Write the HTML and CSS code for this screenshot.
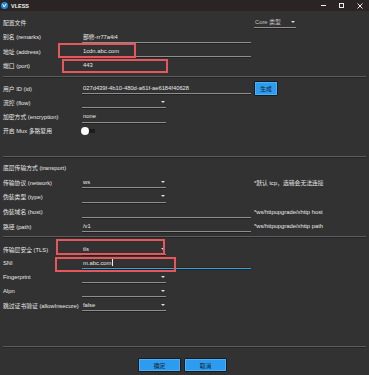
FILE: index.html
```html
<!DOCTYPE html>
<html lang="zh-CN">
<head>
  <meta charset="UTF-8" />
  <meta name="viewport" content="width=device-width, initial-scale=1.0"/>
  <title>VLESS</title>
  <link rel="stylesheet" href="styles.css">
</head>
<body>

  <div class="window">
    <header class="titlebar">
      <svg class="app-icon" width="7" height="7" viewBox="0 0 14 14">
        <circle cx="7" cy="7" r="7" fill="#1f8ad8"/>
        <path d="M3.5 4.5 L6.5 10 L10.5 3.5" fill="none" stroke="#fff" stroke-width="2"/>
      </svg>
      <span class="app-title">VLESS</span>
      <div class="win-controls">
        <svg width="5" height="5" viewBox="0 0 5 5"><rect x="0" y="2" width="5" height="1" fill="#eee"/></svg>
        <svg width="5" height="5" viewBox="0 0 5 5"><rect x="0.5" y="0.5" width="4" height="4" fill="none" stroke="#eee"/></svg>
        <svg width="6" height="6" viewBox="0 0 6 6"><path d="M0.5 0.5 L5.5 5.5 M5.5 0.5 L0.5 5.5" stroke="#eee" stroke-width="1"/></svg>
      </div>
    </header>

    <main class="content">
      <section class="group g-profile">
        <div class="row">
          <span class="label">配置文件</span>
          <span></span>
          <div class="combo core-combo">Core 类型</div>
        </div>
        <div class="row">
          <span class="label">别名 (remarks)</span>
          <div class="field">部修-rr77a4i4</div>
        </div>
        <div class="row">
          <span class="label">地址 (address)</span>
          <div class="field">1cdn.abc.com</div>
        </div>
        <div class="row">
          <span class="label">端口 (port)</span>
          <div class="field short">443</div>
        </div>
      </section>

      <hr class="sep">

      <section class="group g-user">
        <div class="row">
          <span class="label">用户 ID (id)</span>
          <div class="field">027d439f-4b10-480d-a61f-ae6184f40628</div>
          <button class="btn btn-small">生成</button>
        </div>
        <div class="row">
          <span class="label">流控 (flow)</span>
          <div class="combo"></div>
        </div>
        <div class="row">
          <span class="label">加密方式 (encryption)</span>
          <div class="field short">none</div>
        </div>
        <div class="row">
          <span class="label">开启 Mux 多路复用</span>
          <div class="switch"></div>
        </div>
      </section>

      <hr class="sep">

      <section class="group g-transport">
        <div class="row">
          <span class="label">底层传输方式 (transport)</span>
        </div>
        <div class="row">
          <span class="label">传输协议 (network)</span>
          <div class="combo">ws</div>
          <span class="note">*默认 tcp，选错会无法连接</span>
        </div>
        <div class="row">
          <span class="label">伪装类型 (type)</span>
          <div class="combo"></div>
        </div>
        <div class="row">
          <span class="label">伪装域名 (host)</span>
          <div class="field"></div>
          <span class="note">*ws/httpupgrade/xhttp host</span>
        </div>
        <div class="row">
          <span class="label">路径 (path)</span>
          <div class="field">/v1</div>
          <span class="note">*ws/httpupgrade/xhttp path</span>
        </div>
      </section>

      <hr class="sep">

      <section class="group g-tls">
        <div class="row">
          <span class="label">传输层安全 (TLS)</span>
          <div class="combo">tls</div>
        </div>
        <div class="row">
          <span class="label">SNI</span>
          <div class="field focused">m.abc.com<span class="caret"></span></div>
        </div>
        <div class="row">
          <span class="label">Fingerprint</span>
          <div class="combo"></div>
        </div>
        <div class="row">
          <span class="label">Alpn</span>
          <div class="combo"></div>
        </div>
        <div class="row">
          <span class="label">跳过证书验证 (allowInsecure)</span>
          <div class="combo">false</div>
        </div>
      </section>

      <hr class="sep">
    </main>

    <footer class="actions">
      <button class="btn">确定</button>
      <button class="btn">取消</button>
    </footer>

    <!-- annotation boxes drawn over the form -->
    <div class="mark mark-address"></div>
    <div class="mark mark-port"></div>
    <div class="mark mark-tls"></div>
    <div class="mark mark-sni"></div>
  </div>

</body>
</html>
```

FILE: styles.css
```css
body {
  margin: 0;
  background-color: #323232;
  font-family: "Liberation Sans", "Noto Sans CJK SC", sans-serif;
  font-size: 5.8px;
  color: #e8e8e8;
}

.window {
  position: relative;
  width: 369px;
  height: 375px;
  display: flex;
  flex-direction: column;
  overflow: hidden;
  background-color: #323232;
}

.titlebar {
  height: 11px;
  flex-shrink: 0;
  display: flex;
  align-items: center;
  padding: 0 6px 0 1px;
  background-color: #2a2424;
}

.app-icon {
  margin-right: 3px;
}

.app-title {
  font-weight: bold;
  font-size: 5.5px;
  color: #f2f2f2;
}

.win-controls {
  margin-left: auto;
  display: flex;
  align-items: center;
  gap: 13px;
}

.content {
  flex: 1;
  display: flex;
  flex-direction: column;
  padding: 0 3px;
}

.group {
  --rh: 14.5px;
  display: flex;
  flex-direction: column;
}

.g-profile {
  padding: 3.75px 0 3.25px;
}

.g-user {
  --rh: 14.33px;
  padding: 3.75px 0 18.25px;
}

.g-transport {
  --rh: 14.75px;
  padding: 2.75px 0 2.5px;
}

.g-tls {
  --rh: 14px;
  padding: 5px 0 0;
  flex: 1;
}

.row {
  display: grid;
  grid-template-columns: 76px 169px auto;
  column-gap: 3px;
  align-items: center;
  height: var(--rh);
}

.label {
  white-space: nowrap;
}

.sep {
  margin: 0;
  border: none;
  height: 1px;
  background-color: #5c5c5c;
  box-shadow: 0 1px 0 #262626;
}

.field {
  height: 11px;
  display: flex;
  align-items: center;
  padding-left: 1px;
  border-bottom: 1px solid #8e8e8e;
  box-shadow: 0 1px 0 #222;
  white-space: nowrap;
}

.field.short {
  width: 83px;
}

.field.focused {
  border-bottom-color: #2aa8e2;
  box-shadow: 0 -1px 0 #3a2222 inset, 0 1px 0 #222;
}

.caret {
  display: inline-block;
  width: 1px;
  height: 7px;
  margin-left: 1px;
  background-color: #f0f0f0;
}

.combo {
  position: relative;
  width: 83px;
  height: 11px;
  display: flex;
  align-items: center;
  padding-left: 1px;
  border-bottom: 1px solid #8e8e8e;
  box-shadow: 0 1px 0 #222;
  white-space: nowrap;
}

.combo::after {
  content: "";
  position: absolute;
  right: 1px;
  top: 4.5px;
  border-left: 2px solid transparent;
  border-right: 2px solid transparent;
  border-top: 2px solid #e0e0e0;
}

.core-combo {
  width: 41px;
  color: #c4c4c4;
}

.switch {
  width: 14px;
  height: 8px;
  margin-left: -1px;
  background: linear-gradient(#1c1c1c, #1c1c1c) no-repeat 4px 2px / 10px 4px;
}

.switch::before {
  content: "";
  display: block;
  width: 8px;
  height: 8px;
  border-radius: 50%;
  background-color: #fafafa;
}

.note {
  white-space: nowrap;
}

.btn {
  width: 43px;
  height: 14px;
  padding: 0;
  border: 1px solid #141a22;
  border-radius: 1px;
  background-color: #2b9cf0;
  box-shadow: inset 0 0 0 1px #4fb0f5;
  color: #16202a;
  font-family: inherit;
  font-size: 5.8px;
}

.btn-small {
  width: 24px;
  height: 15px;
}

.actions {
  height: 28px;
  flex-shrink: 0;
  display: flex;
  justify-content: center;
  align-items: flex-start;
  gap: 3px;
  padding: 11px 4px 0 0;
  box-sizing: border-box;
}

.mark {
  position: absolute;
  border: 2px solid #e5575a;
  box-sizing: border-box;
}

.mark-address {
  left: 58px;
  top: 43px;
  width: 78px;
  height: 15px;
}

.mark-port {
  left: 62px;
  top: 59px;
  width: 106px;
  height: 14px;
}

.mark-tls {
  left: 56px;
  top: 239px;
  width: 109px;
  height: 16px;
}

.mark-sni {
  left: 55px;
  top: 257px;
  width: 121px;
  height: 15px;
}
```
